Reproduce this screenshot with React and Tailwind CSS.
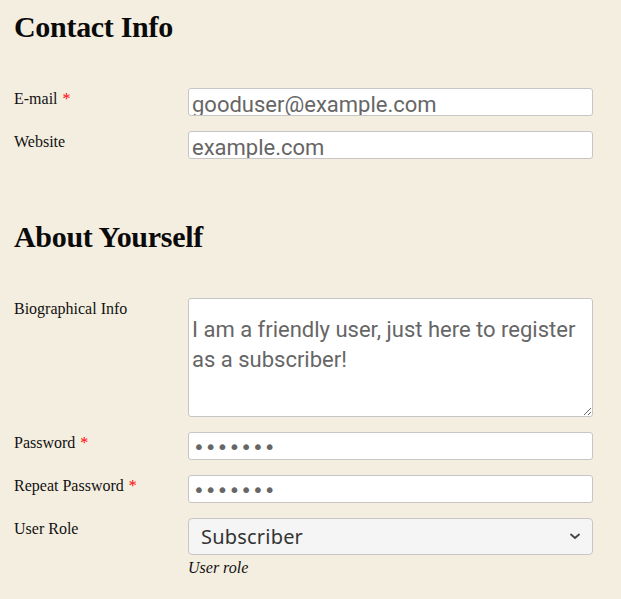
import React from 'react';

const inputCls =
  "block w-full h-[28px] rounded-[3px] border border-[#c6c6c6] bg-white pl-[3px] pr-2 pt-[5px] pb-0 text-[22px] leading-none text-[#666] font-['Roboto',sans-serif] outline-none";

const passwordCls =
  "block w-full h-[28px] rounded-[3px] border border-[#c6c6c6] bg-white pl-[4px] pr-2 pt-[2px] pb-0 text-[20px] leading-none text-[#666] font-['DejaVu_Sans',sans-serif] outline-none";

function Required() {
  return <span className="ml-[5px] text-[#f00]">*</span>;
}

function Row({ label, required, children }) {
  return (
    <div className="flex">
      <label className="w-[174px] shrink-0 text-[16px] leading-[21px] text-[#111]">
        {label}
        {required && <Required />}
      </label>
      <div className="flex-1">{children}</div>
    </div>
  );
}

export default function App() {
  return (
    <div className="min-h-screen bg-[#f4eee0] pl-[14px] pr-[28px] pt-[9px] font-['Liberation_Serif',serif]">
      {/* Contact Info */}
      <h2 className="text-[30px] font-bold leading-[36px] tracking-[-0.3px] text-[#0a0a0a]">Contact Info</h2>
      <div className="mt-[43px] space-y-[15px]">
        <Row label="E-mail" required>
          <input type="email" readOnly value="gooduser@example.com" className={inputCls} />
        </Row>
        <Row label="Website">
          <input type="text" readOnly value="example.com" className={inputCls} />
        </Row>
      </div>

      {/* About Yourself */}
      <h2 className="mt-[60px] text-[30px] font-bold leading-[36px] tracking-[-0.3px] text-[#0a0a0a]">About Yourself</h2>
      <div className="mt-[43px] space-y-[15px]">
        <Row label="Biographical Info">
          <textarea
            readOnly
            value="I am a friendly user, just here to register as a subscriber!"
            className="block w-full h-[119px] rounded-[3px] border border-[#c6c6c6] bg-white pl-[3px] pr-2 pt-[16px] text-[22px] leading-[30px] text-[#666] font-['Roboto',sans-serif] outline-none"
          />
        </Row>
        <Row label="Password" required>
          <input type="password" readOnly value="secret1" className={passwordCls} />
        </Row>
        <Row label="Repeat Password" required>
          <input type="password" readOnly value="secret1" className={passwordCls} />
        </Row>
        <Row label="User Role">
          <div className="relative">
            <select
              defaultValue="subscriber"
              className="block w-full h-[37px] appearance-none rounded-[4px] border border-[#c6c6c6] bg-[#f5f5f5] pl-[12px] pr-8 text-[20px] leading-none tracking-[0.2px] text-[#333] font-['Noto_Sans',sans-serif] outline-none"
            >
              <option value="subscriber">Subscriber</option>
              <option value="contributor">Contributor</option>
              <option value="author">Author</option>
            </select>
            <svg
              className="pointer-events-none absolute right-[13px] top-[15px]"
              width="10"
              height="7"
              viewBox="0 0 10 7"
              fill="none"
            >
              <path d="M1 1.5 L5 5 L9 1.5" stroke="#444" strokeWidth="1.8" strokeLinecap="round" strokeLinejoin="round" />
            </svg>
          </div>
          <p className="mt-[2px] text-[16px] leading-[21px] italic text-[#111]">User role</p>
        </Row>
      </div>
    </div>
  );
}
